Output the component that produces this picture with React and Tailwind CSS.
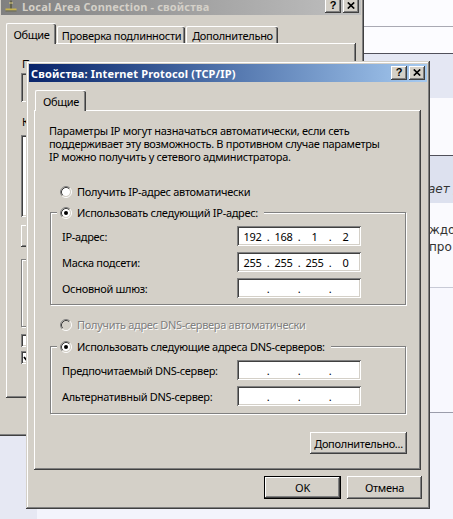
import React from 'react';

const raised = 'shadow-[inset_-1px_-1px_#404040,inset_1px_1px_#ffffff,inset_-2px_-2px_#808080]';
const frame = 'shadow-[inset_-1px_-1px_#404040,inset_1px_1px_#d4d0c8,inset_-2px_-2px_#808080,inset_2px_2px_#ffffff]';
const sunken = 'shadow-[inset_1px_1px_#808080,inset_-1px_-1px_#ffffff,inset_2px_2px_#404040,inset_-2px_-2px_#d4d0c8]';
const etched = 'border border-[#808080] shadow-[inset_1px_1px_#ffffff,1px_1px_#ffffff]';
const disabledText = 'text-[#808080] [text-shadow:1px_1px_0_#ffffff]';
const titleFont = "font-['Noto_Sans',sans-serif] text-[11px] font-bold tracking-[0.15px] whitespace-nowrap";

function Radio({ checked, disabled }) {
  return (
    <svg width="12" height="12" viewBox="0 0 12 12" className="shrink-0">
      <circle cx="6" cy="6" r="4" fill={disabled ? '#d4d0c8' : '#ffffff'} />
      <path d="M2.11 9.89A5.5 5.5 0 0 1 9.89 2.11" fill="none" stroke="#808080" />
      <path d="M9.89 2.11A5.5 5.5 0 0 1 2.11 9.89" fill="none" stroke="#ffffff" />
      <path d="M2.82 9.18A4.5 4.5 0 0 1 9.18 2.82" fill="none" stroke="#404040" />
      <path d="M9.18 2.82A4.5 4.5 0 0 1 2.82 9.18" fill="none" stroke="#d4d0c8" />
      {checked && <circle cx="6" cy="6" r="2" fill="#000000" />}
    </svg>
  );
}

function CapButtons() {
  return (
    <div className="flex gap-[2px]">
      <div className={`flex h-[14px] w-[16px] items-center justify-center bg-[#d4d0c8] ${raised}`}>
        <span className="-mt-px font-['Liberation_Sans',sans-serif] text-[11px] font-bold leading-none text-black">?</span>
      </div>
      <div className={`flex h-[14px] w-[16px] items-center justify-center bg-[#d4d0c8] ${raised}`}>
        <svg width="8" height="7" viewBox="0 0 8 7" className="-mt-px -ml-px">
          <path d="M0.8 0.5L7.2 6.5M7.2 0.5L0.8 6.5" stroke="#000000" strokeWidth="1.7" />
        </svg>
      </div>
    </div>
  );
}

function IpField({ parts = [] }) {
  return (
    <div className={`flex h-[20px] w-[124px] items-center bg-white px-[2px] ${sunken}`}>
      {[0, 1, 2, 3].map((i) => (
        <React.Fragment key={i}>
          {i > 0 && <span className="w-[4px] text-center">.</span>}
          <span className="w-[27px] text-center">{parts[i] ?? ''}</span>
        </React.Fragment>
      ))}
    </div>
  );
}

function FieldRow({ label, parts }) {
  return (
    <div className="flex items-center">
      <span className="w-[186px] shrink-0 whitespace-nowrap pl-[11px]">{label}</span>
      <IpField parts={parts} />
    </div>
  );
}

function Button({ children, width, primary }) {
  return (
    <div
      className={`flex h-[23px] items-center justify-center bg-[#d4d0c8] ${
        primary ? 'border border-black' : ''
      } ${raised}`}
      style={{ width }}
    >
      {children}
    </div>
  );
}

function Group({ legend, children, className = '' }) {
  return (
    <fieldset className={`ml-[16px] w-[356px] ${etched} ${className}`}>
      <legend className="ml-[6px] flex items-center gap-[5px] whitespace-nowrap bg-[#d4d0c8] pl-[3px] pr-[6px] leading-[13px]">
        <Radio checked />
        <span>{legend}</span>
      </legend>
      <div className="mt-[7px] flex flex-col gap-[6px]">{children}</div>
    </fieldset>
  );
}

function Tab({ children, width, active, className = '' }) {
  return (
    <div
      className={`flex items-center justify-center whitespace-nowrap rounded-t-[2px] border-l border-t border-white shadow-[inset_-1px_0_#404040,inset_-2px_0_#808080] ${
        active ? 'relative z-10 -mb-px h-[21px] bg-[#d4d0c8]' : 'h-[17px]'
      } ${className}`}
      style={{ width }}
    >
      {children}
    </div>
  );
}

function BackWindow() {
  return (
    <div className={`absolute left-[-2px] top-[-6px] h-[442px] w-[366px] bg-[#d4d0c8] p-[3px] ${frame}`}>
      <div className="flex h-[18px] items-center justify-between bg-gradient-to-r from-[#808080] to-[#c0c0c0] pr-[2px]">
        <div className="flex items-center gap-[3px] pl-[2px]">
          <svg width="16" height="16" viewBox="0 0 16 16">
            <path d="M8 2.5V11" stroke="#5a5a40" strokeWidth="1.6" />
            <path d="M2.5 11.5H13.5" stroke="#c8b450" strokeWidth="2" />
            <path d="M2.5 13H13.5" stroke="#6a6a50" strokeWidth="1" />
            <path d="M6 5H10" stroke="#e0d080" strokeWidth="1" />
          </svg>
          <span className={`${titleFont} text-[#d4d0c8]`}>Local Area Connection - свойства</span>
        </div>
        <CapButtons />
      </div>
      <div className="px-[5px] pt-[8px]">
        <div className="flex items-end">
          <Tab width={50} active>
            Общие
          </Tab>
          <Tab width={128} className="ml-[1px]">
            Проверка подлинности
          </Tab>
          <Tab width={92} className="ml-[1px]">
            Дополнительно
          </Tab>
        </div>
        <div className={`flex h-[355px] flex-col pl-[15px] ${raised}`}>
          <div className="mt-[14px] whitespace-nowrap pl-[1px]">Подключение через:</div>
          <div className={`mt-[3px] h-[29px] w-[320px] ${sunken}`} />
          <div className="mt-[13px] whitespace-nowrap pl-[1px]">Компоненты, используемые этим подключением:</div>
          <div className={`mt-[7px] h-[82px] w-[320px] bg-white ${sunken}`} />
          <div className={`mt-[8px] h-[22px] w-[97px] ${raised}`} />
          <div className={`mt-[12px] h-[68px] w-[318px] ${etched}`} />
          <div className="mt-[7px] flex items-center gap-[4px]">
            <div className={`h-[13px] w-[13px] shrink-0 bg-white ${sunken}`} />
            <span className="whitespace-nowrap">При подключении вывести значок</span>
          </div>
          <div className="mt-[4px] flex items-center gap-[4px]">
            <div className={`relative h-[13px] w-[13px] shrink-0 bg-white ${sunken}`}>
              <svg width="13" height="13" viewBox="0 0 13 13" className="absolute left-0 top-0">
                <path d="M3 6L5 8.5L10 3.5" fill="none" stroke="#000000" strokeWidth="1.8" />
              </svg>
            </div>
            <span className="whitespace-nowrap">Уведомлять при ограниченном подключении</span>
          </div>
        </div>
      </div>
    </div>
  );
}

function FrontWindow() {
  return (
    <div className={`absolute left-[26px] top-[61px] h-[448px] w-[404px] bg-[#d4d0c8] p-[3px] ${frame}`}>
      <div className="flex h-[18px] items-center justify-between bg-gradient-to-r from-[#0a246a] to-[#a6caf0] pl-[2px] pr-[2px]">
        <span className={`${titleFont} text-white`}>Свойства: Internet Protocol (TCP/IP)</span>
        <CapButtons />
      </div>
      <div className="flex flex-col px-[5px] pt-[8px]">
        <div className="flex items-end">
          <Tab width={51} active className="ml-[1px]">
            Общие
          </Tab>
        </div>
        <div className={`flex h-[360px] w-[387px] flex-col ${raised}`}>
          <p className="ml-[15px] mt-[14px] whitespace-nowrap leading-[13px]">
            Параметры IP могут назначаться автоматически, если сеть
            <br />
            поддерживает эту возможность. В противном случае параметры
            <br />
            IP можно получить у сетевого администратора.
          </p>
          <div className="ml-[26px] mt-[22px] flex h-[13px] items-center gap-[5px]">
            <Radio />
            <span>Получить IP-адрес автоматически</span>
          </div>
          <Group legend="Использовать следующий IP-адрес:" className="mt-[8px] pb-[6px]">
            <FieldRow label="IP-адрес:" parts={['192', '168', '1', '2']} />
            <FieldRow label="Маска подсети:" parts={['255', '255', '255', '0']} />
            <FieldRow label="Основной шлюз:" />
          </Group>
          <div className="ml-[26px] mt-[13px] flex h-[13px] items-center gap-[5px]">
            <Radio disabled />
            <span className={disabledText}>Получить адрес DNS-сервера автоматически</span>
          </div>
          <Group legend="Использовать следующие адреса DNS-серверов:" className="mt-[9px] pb-[7px]">
            <FieldRow label="Предпочитаемый DNS-сервер:" />
            <FieldRow label="Альтернативный DNS-сервер:" />
          </Group>
          <div className="mr-[14px] mt-[18px] self-end">
            <div className={`flex h-[22px] w-[97px] items-center justify-center bg-[#d4d0c8] ${raised}`}>
              Дополнительно...
            </div>
          </div>
        </div>
        <div className="mt-[6px] flex justify-end gap-[6px]">
          <Button width={77} primary>
            OK
          </Button>
          <Button width={75}>Отмена</Button>
        </div>
      </div>
    </div>
  );
}

export default function App() {
  return (
    <div className="relative h-[519px] w-[453px] overflow-hidden bg-[#f6f6fd] font-['Noto_Sans',sans-serif] text-[11px] leading-[13px] tracking-[-0.3px] text-black">
      <div className="flex h-full flex-col font-['DejaVu_Sans',sans-serif] text-[12px] tracking-normal text-[#333333]">
        <div className="h-[26px] bg-[#fcfcff]" />
        <div className="h-px bg-[#a9a9b3]" />
        <div className="h-[26px] bg-[#fcfcff]" />
        <div className="h-px bg-[#50505a]" />
        <div className="h-[44px] bg-[#e4e7f3]" />
        <div className="h-[57px] bg-[#fafafe]" />
        <div className="h-px bg-[#50505a]" />
        <div className="h-[47px] overflow-hidden whitespace-nowrap bg-[#dde1ef] pl-[428px] pt-[26px] italic leading-[15px]">ает д</div>
        <div className="h-[84px] overflow-hidden whitespace-nowrap bg-[#fafafe] pl-[429px] pt-[19px] leading-[17px]">
          ждо
          <br />
          про
        </div>
        <div className="h-px bg-[#c8cad6]" />
        <div className="h-[124px] bg-[#f8f8fe]" />
        <div className="h-px bg-[#9a9caa]" />
        <div className="flex flex-1">
          <div className="w-[37px] bg-[#e6e8f3]" />
          <div className="flex-1 bg-[#f3f4fc]" />
        </div>
      </div>
      <BackWindow />
      <FrontWindow />
    </div>
  );
}
